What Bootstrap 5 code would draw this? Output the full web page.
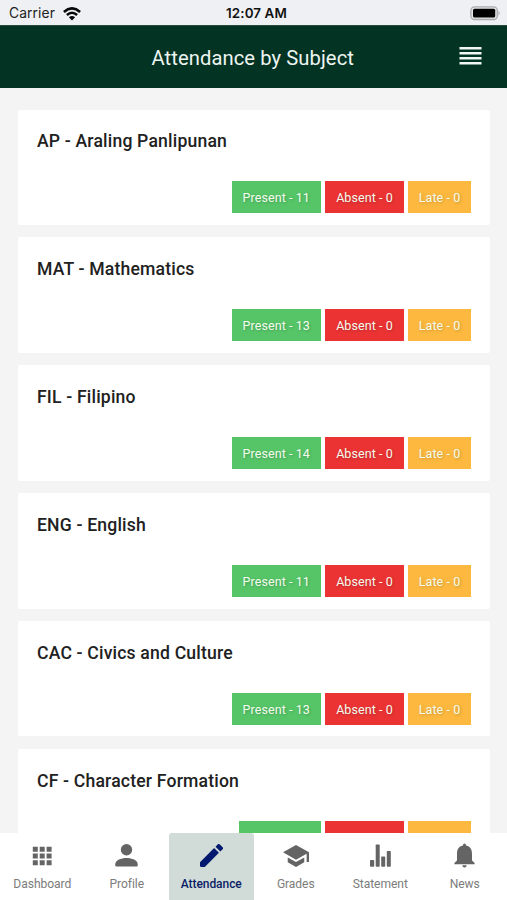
<!DOCTYPE html>
<html lang="en">
<head>
<meta charset="utf-8">
<meta name="viewport" content="width=device-width, initial-scale=1">
<title>Attendance by Subject</title>
<link href="https://cdn.jsdelivr.net/npm/bootstrap@5.3.0/dist/css/bootstrap.min.css" rel="stylesheet">
<style>
body{font-family:Roboto,sans-serif;background:#f4f4f4;color:#212121}
.screen{height:900px}
.status{height:25px;background:#eff0f4;font-family:Inter,sans-serif;font-size:13.5px;line-height:25px;padding:2px 6px 0 9px;color:#222}
.status .clock{font-weight:600;font-size:13.4px;color:#111;letter-spacing:.1px;margin-right:-3px}
.status .side{flex:1 1 0}
.carrier{letter-spacing:.1px;font-size:13.8px}
.topbar{height:63px;background:#033323;border-top:1px solid #234b3e;color:#eef5f1;padding:0 25.5px 0 25px}
.topbar h1{font-size:20.2px;font-weight:400;line-height:24px;letter-spacing:.08px;padding-top:1px}
.topbar svg{margin-top:-1px}
.subjects{padding:21.5px 17.5px 0 18px;gap:12.5px}
.subject{height:115.4px;border-radius:2px;padding:20.9px 18.5px 0 19px}
.subject h2{font-size:17.6px;font-weight:500;line-height:22px;height:51px;margin:0;letter-spacing:.18px}
.tag{height:32px;line-height:33px;font-size:12.5px;padding:0;color:#f4fcee;text-align:center;white-space:nowrap;text-shadow:1px 1px 3px rgba(0,0,0,.22);letter-spacing:.08px}
.tags{gap:4px}
.present{background:#56c568;width:89.5px}
.present.short{width:82.5px}
.absent{background:#eb3334;width:79px}
.late{background:#fdb93f;width:63px}
.tabs{height:67.5px}
.tab-item{color:#7c7c7c;font-size:12.1px;line-height:16px;padding-top:8px;letter-spacing:-.08px;text-decoration:none;border-radius:3px 3px 0 0}
.tab-item svg{display:block;fill:#646464}
.glyph{height:30px}
.tab-item .caption{margin-top:5.5px}
.tab-item.current{background:#d1dcd8;color:#0b1c66;font-weight:500;font-size:12px;letter-spacing:-.06px}
.current svg{fill:#03186f}
</style>
<script src="https://cdn.jsdelivr.net/npm/bootstrap@5.3.0/dist/js/bootstrap.bundle.min.js"></script>
</head>
<body>
<div class="screen d-flex flex-column overflow-hidden">
  <div class="status d-flex align-items-center flex-shrink-0">
    <div class="side d-flex align-items-center gap-2"><span class="carrier">Carrier</span>
      <svg width="18" height="14" viewBox="0 0 18 14" fill="none" stroke="#080808" stroke-width="2.6"><path d="M.9 4.9Q9-2.2 17.1 4.9M3.9 8Q9 3.5 14.1 8"/><path d="M9 13.5L5.9 10.3Q9 7.7 12.1 10.3Z" fill="#080808" stroke="none"/></svg>
    </div>
    <span class="clock">12:07 AM</span>
    <div class="side d-flex justify-content-end">
      <svg width="31" height="15" viewBox="0 0 31 15"><rect x=".9" y=".9" width="26.4" height="12.6" rx="3.6" fill="#e4e5e8" stroke="#aaabad" stroke-width="1.3"/><rect x="3" y="2.8" width="22.2" height="8.8" rx="1.5" fill="#000"/><path d="M28.5 4.8Q31 7.2 28.5 9.5Z" fill="#aaabad"/></svg>
    </div>
  </div>
  <header class="topbar d-flex align-items-center flex-shrink-0">
    <div style="width:22px"></div>
    <h1 class="flex-grow-1 text-center m-0">Attendance by Subject</h1>
    <svg width="23" height="23" viewBox="0 0 23 23" fill="#f1f7f4"><path d="M.5 2h22v2.5h-22zM.5 7h22v2.5h-22zM.5 12h22v2.5h-22zM.5 17h22v2.5h-22z"/></svg>
  </header>
  <main class="subjects d-flex flex-column flex-grow-1 overflow-hidden">
    <section class="subject bg-white flex-shrink-0"><h2>AP - Araling Panlipunan</h2><div class="tags d-flex justify-content-end"><span class="tag present">Present - 11</span><span class="tag absent">Absent - 0</span><span class="tag late">Late - 0</span></div></section>
    <section class="subject bg-white flex-shrink-0"><h2>MAT - Mathematics</h2><div class="tags d-flex justify-content-end"><span class="tag present">Present - 13</span><span class="tag absent">Absent - 0</span><span class="tag late">Late - 0</span></div></section>
    <section class="subject bg-white flex-shrink-0"><h2>FIL - Filipino</h2><div class="tags d-flex justify-content-end"><span class="tag present">Present - 14</span><span class="tag absent">Absent - 0</span><span class="tag late">Late - 0</span></div></section>
    <section class="subject bg-white flex-shrink-0"><h2>ENG - English</h2><div class="tags d-flex justify-content-end"><span class="tag present">Present - 11</span><span class="tag absent">Absent - 0</span><span class="tag late">Late - 0</span></div></section>
    <section class="subject bg-white flex-shrink-0"><h2>CAC - Civics and Culture</h2><div class="tags d-flex justify-content-end"><span class="tag present">Present - 13</span><span class="tag absent">Absent - 0</span><span class="tag late">Late - 0</span></div></section>
    <section class="subject bg-white flex-shrink-0"><h2>CF - Character Formation</h2><div class="tags d-flex justify-content-end"><span class="tag present short"></span><span class="tag absent"></span><span class="tag late"></span></div></section>
  </main>
  <nav class="tabs row row-cols-6 g-0 bg-white flex-shrink-0">
    <a class="tab-item col d-flex flex-column align-items-center"><span class="glyph d-flex align-items-center"><svg width="20" height="20" viewBox="0 0 20 20"><path d="M.8.8h5v5h-5zM7.7.8h5v5h-5zM14.6.8h5v5h-5zM.8 7.5h5v5h-5zM7.7 7.5h5v5h-5zM14.6 7.5h5v5h-5zM.8 14.3h5v5h-5zM7.7 14.3h5v5h-5zM14.6 14.3h5v5h-5z"/></svg></span><span class="caption">Dashboard</span></a>
    <a class="tab-item col d-flex flex-column align-items-center"><span class="glyph d-flex align-items-center"><svg width="23" height="23" viewBox="0 0 23 23"><circle cx="11.5" cy="5.8" r="5.7"/><path d="M11.5 14C6 14 .3 16.1.3 20.3V21.5Q.3 22.6 1.4 22.6H21.6Q22.7 22.6 22.7 21.5V20.3C22.7 16.1 17 14 11.5 14Z"/></svg></span><span class="caption">Profile</span></a>
    <a class="tab-item current col d-flex flex-column align-items-center"><span class="glyph d-flex align-items-center"><svg width="23" height="23" viewBox="3 3 18 18"><path d="M3 17.25V20Q3 21 4 21H6.75L17.81 9.94l-3.75-3.75zM20.71 7.04a1 1 0 000-1.41l-2.34-2.34a1 1 0 00-1.41 0l-1.83 1.83 3.75 3.75z"/></svg></span><span class="caption">Attendance</span></a>
    <a class="tab-item col d-flex flex-column align-items-center"><span class="glyph d-flex align-items-center"><svg width="26" height="22" viewBox="1 3 22 18" preserveAspectRatio="none"><path d="M5 13.18v4L12 21l7-3.82v-4L12 17zM12 3L1 9l11 6 9-4.91V17h2V9z"/></svg></span><span class="caption">Grades</span></a>
    <a class="tab-item col d-flex flex-column align-items-center"><span class="glyph d-flex align-items-center"><svg width="21" height="23" viewBox="0 0 21 23"><rect y="16" width="4.2" height="6.7" rx=".8"/><rect x="5.7" y=".5" width="4" height="22.2" rx=".8"/><rect x="11.2" y="12.5" width="4" height="10.2" rx=".8"/><rect x="16.8" y="7" width="4" height="15.7" rx=".8"/></svg></span><span class="caption">Statement</span></a>
    <a class="tab-item col d-flex flex-column align-items-center"><span class="glyph d-flex align-items-center"><svg width="21" height="25" viewBox="0 0 21 25"><path d="M10.5.4Q12 .4 12.1 2.6C16.5 3.4 18 6.7 18 11V17.5L20.6 20V21.2H.4V20L3 17.5V11C3 6.7 4.5 3.4 8.9 2.6Q9 .4 10.5.4ZM8.3 22.2h4.4Q12.5 24.6 10.5 24.6T8.3 22.2Z"/></svg></span><span class="caption">News</span></a>
  </nav>
</div>
</body>
</html>
